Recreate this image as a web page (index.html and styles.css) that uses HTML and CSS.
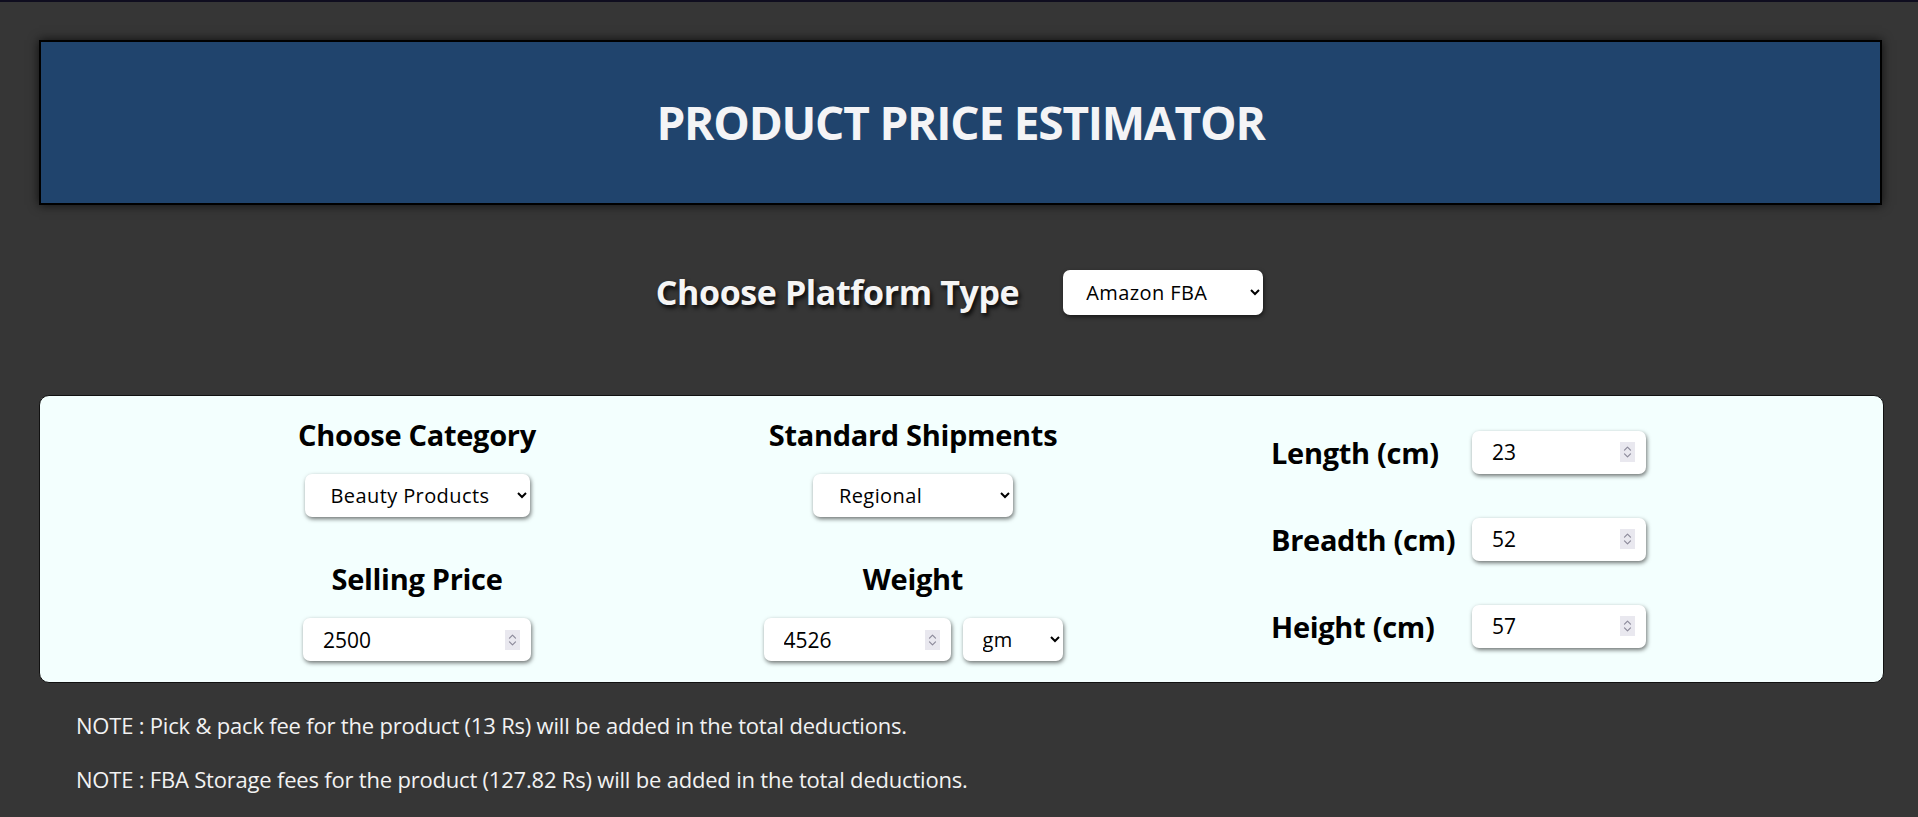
FILE: index.html
```html
<!DOCTYPE html>
<html lang="en">
<head>
<meta charset="utf-8">
<title>Product Price Estimator</title>
<link rel="stylesheet" href="styles.css">
</head>
<body>
<div class="page">
  <header class="banner">
    <h1 class="title">PRODUCT PRICE ESTIMATOR</h1>
  </header>

  <div class="platform">
    <label class="platform-label" for="platform">Choose Platform Type</label>
    <select id="platform" class="ctl sel sel-platform">
      <option>Amazon FBA</option>
      <option>Amazon Easy Ship</option>
      <option>Flipkart</option>
    </select>
  </div>

  <section class="card">
    <div class="col">
      <label class="lbl">Choose Category</label>
      <select class="ctl sel sel-category">
        <option>Beauty Products</option>
        <option>Books</option>
        <option>Electronics</option>
      </select>
      <label class="lbl lbl-lower">Selling Price</label>
      <div class="ctl numbox num-price">
        <input class="num" type="number" value="2500">
        <span class="spin"><svg viewBox="0 0 15 20" width="15" height="20"><path d="M4.5 8.2 L7.5 5.2 L10.5 8.2 M4.5 11.8 L7.5 14.8 L10.5 11.8" fill="none" stroke="#8d8b9b" stroke-width="1.2" stroke-linecap="round" stroke-linejoin="round"/></svg></span>
      </div>
    </div>

    <div class="col">
      <label class="lbl">Standard Shipments</label>
      <select class="ctl sel sel-ship">
        <option>Regional</option>
        <option>Local</option>
        <option>National</option>
      </select>
      <label class="lbl lbl-lower">Weight</label>
      <div class="weight-row">
        <div class="ctl numbox num-weight">
          <input class="num" type="number" value="4526">
          <span class="spin"><svg viewBox="0 0 15 20" width="15" height="20"><path d="M4.5 8.2 L7.5 5.2 L10.5 8.2 M4.5 11.8 L7.5 14.8 L10.5 11.8" fill="none" stroke="#8d8b9b" stroke-width="1.2" stroke-linecap="round" stroke-linejoin="round"/></svg></span>
        </div>
        <select class="ctl sel sel-unit">
          <option>gm</option>
          <option>kg</option>
        </select>
      </div>
    </div>

    <div class="dims">
      <label class="lbl dim-lbl">Length (cm)</label>
      <div class="ctl numbox num-dim">
        <input class="num" type="number" value="23">
        <span class="spin"><svg viewBox="0 0 15 20" width="15" height="20"><path d="M4.5 8.2 L7.5 5.2 L10.5 8.2 M4.5 11.8 L7.5 14.8 L10.5 11.8" fill="none" stroke="#8d8b9b" stroke-width="1.2" stroke-linecap="round" stroke-linejoin="round"/></svg></span>
      </div>
      <label class="lbl dim-lbl">Breadth (cm)</label>
      <div class="ctl numbox num-dim">
        <input class="num" type="number" value="52">
        <span class="spin"><svg viewBox="0 0 15 20" width="15" height="20"><path d="M4.5 8.2 L7.5 5.2 L10.5 8.2 M4.5 11.8 L7.5 14.8 L10.5 11.8" fill="none" stroke="#8d8b9b" stroke-width="1.2" stroke-linecap="round" stroke-linejoin="round"/></svg></span>
      </div>
      <label class="lbl dim-lbl">Height (cm)</label>
      <div class="ctl numbox num-dim">
        <input class="num" type="number" value="57">
        <span class="spin"><svg viewBox="0 0 15 20" width="15" height="20"><path d="M4.5 8.2 L7.5 5.2 L10.5 8.2 M4.5 11.8 L7.5 14.8 L10.5 11.8" fill="none" stroke="#8d8b9b" stroke-width="1.2" stroke-linecap="round" stroke-linejoin="round"/></svg></span>
      </div>
    </div>
  </section>

  <div class="notes">
    <p class="note">NOTE : Pick &amp; pack fee for the product (13 Rs) will be added in the total deductions.</p>
    <p class="note">NOTE : FBA Storage fees for the product (127.82 Rs) will be added in the total deductions.</p>
  </div>
</div>
</body>
</html>
```

FILE: styles.css
```css
html, body {
  margin: 0;
  padding: 0;
}

body {
  background: #363636;
  border-top: 2px solid #0f0d1f;
  font-family: "Open Sans", "Noto Sans", sans-serif;
  min-height: 815px;
}

.page {
  padding: 38px 34px 0 39px;
}

.banner {
  box-sizing: border-box;
  height: 165px;
  margin-right: 2px;
  background: #20446d;
  border: 2px solid #000;
  box-shadow: 0 0 10px rgba(0, 0, 0, 0.75);
  display: flex;
  align-items: center;
  justify-content: center;
}

.title {
  margin: 0;
  color: #f4f4f6;
  font-size: 46px;
  font-weight: 700;
  line-height: 1.2;
  letter-spacing: -1.2px;
}

.platform {
  margin-top: 64px;
  display: flex;
  align-items: center;
  justify-content: center;
  gap: 44px;
  padding-right: 4px;
}

.platform-label {
  color: #f5f5f5;
  font-size: 34px;
  font-weight: 700;
  letter-spacing: -0.4px;
  text-shadow: 2px 3px 4px rgba(0, 0, 0, 0.85);
}

.ctl {
  box-sizing: border-box;
  height: 43px;
  border: none;
  border-radius: 7px;
  background: #fff;
  color: #000;
  font-family: "Open Sans", "Noto Sans", sans-serif;
  font-size: 20px;
  box-shadow: 1px 2px 4px rgba(0, 0, 0, 0.55);
  outline: none;
}

.sel {
  padding: 0 8px 0 22px;
  letter-spacing: 0.4px;
}

.sel-platform {
  width: 200px;
  height: 45px;
  padding-left: 19px;
}

.sel-category {
  width: 225px;
}

.sel-ship {
  width: 200px;
}

.sel-unit {
  width: 100px;
  padding-left: 16px;
}

.numbox {
  display: flex;
  align-items: center;
  padding: 0 11px 0 0;
}

.num {
  flex: 1;
  min-width: 0;
  height: 100%;
  box-sizing: border-box;
  border: none;
  background: transparent;
  outline: none;
  padding: 0 0 0 20px;
  color: #000;
  font-family: "Open Sans", "Noto Sans", sans-serif;
  font-size: 21px;
  -moz-appearance: textfield;
}

.num::-webkit-inner-spin-button,
.num::-webkit-outer-spin-button {
  -webkit-appearance: none;
  margin: 0;
}

.spin {
  display: flex;
  width: 15px;
  height: 20px;
  background: #e9e8ef;
}

.num-price {
  width: 228px;
}

.num-weight {
  width: 187px;
}

.num-dim {
  width: 174px;
}

.card {
  margin-top: 80px;
  box-sizing: border-box;
  height: 288px;
  background: #f3fffe;
  border: 1px solid #111;
  border-radius: 10px;
  display: flex;
  align-items: center;
  padding-left: 129px;
}

.col {
  width: 496px;
  display: flex;
  flex-direction: column;
  align-items: center;
}

.lbl {
  color: #000;
  font-size: 29px;
  font-weight: 700;
  line-height: 35px;
  letter-spacing: -0.3px;
  margin-bottom: 22px;
}

.lbl-lower {
  margin-top: 44px;
}

.weight-row {
  display: flex;
  gap: 12px;
}

.dims {
  margin-left: 110px;
  display: grid;
  grid-template-columns: 201px auto;
  row-gap: 44px;
  align-items: center;
}

.dim-lbl {
  margin: 0;
}

.notes {
  padding: 27px 0 0 37px;
}

.note {
  margin: 0 0 23.5px;
  color: #f2f2f2;
  font-size: 22px;
  line-height: 30px;
  letter-spacing: -0.2px;
}
```
